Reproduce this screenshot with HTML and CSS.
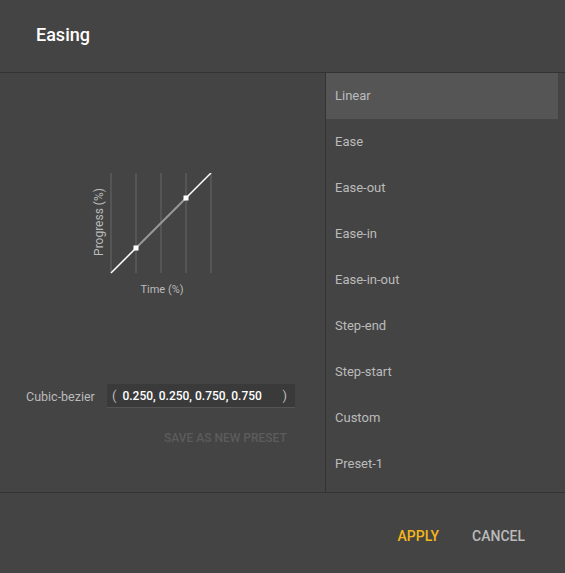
FILE: index.html
```html
<!DOCTYPE html>
<html lang="en">
<head>
  <meta charset="UTF-8" />
  <title>Easing</title>
  <link rel="stylesheet" href="styles.css">
</head>
<body>
  <div class="dialog">
    <div class="dialog-header">
      <h2>Easing</h2>
    </div>
    <div class="dialog-body">
      <div class="editor">
        <div class="graph">
          <span class="axis-y">Progress (%)</span>
          <svg width="102" height="101" viewBox="0 0 102 101">
            <g stroke="#555" stroke-width="2">
              <line x1="1" y1="0" x2="1" y2="100" />
              <line x1="26" y1="0" x2="26" y2="100" />
              <line x1="51" y1="0" x2="51" y2="100" />
              <line x1="76" y1="0" x2="76" y2="100" />
              <line x1="101" y1="0" x2="101" y2="100" />
            </g>
            <line x1="1" y1="100" x2="26" y2="75" stroke="#fff" stroke-width="1.5" />
            <line x1="26" y1="75" x2="76" y2="25" stroke="#999" stroke-width="2" />
            <line x1="76" y1="25" x2="101" y2="0" stroke="#fff" stroke-width="1.5" />
            <rect x="23.5" y="72.5" width="5" height="5" fill="#fff" />
            <rect x="73.5" y="22.5" width="5" height="5" fill="#fff" />
          </svg>
          <span class="axis-x">Time (%)</span>
        </div>
        <div class="bezier">
          <label>Cubic-bezier</label>
          <div class="bezier-input">
            <span>(</span>
            <span class="values">0.250, 0.250, 0.750, 0.750</span>
            <span>)</span>
          </div>
        </div>
        <div class="save">SAVE AS NEW PRESET</div>
      </div>
      <ul class="presets">
        <li class="active">Linear</li>
        <li>Ease</li>
        <li>Ease-out</li>
        <li>Ease-in</li>
        <li>Ease-in-out</li>
        <li>Step-end</li>
        <li>Step-start</li>
        <li>Custom</li>
        <li>Preset-1</li>
      </ul>
    </div>
    <div class="dialog-footer">
      <button class="apply">APPLY</button>
      <button class="cancel">CANCEL</button>
    </div>
  </div>
</body>
</html>
```

FILE: styles.css
```css
body {
  margin: 0;
  padding: 0;
  background: #444444;
  font-family: Roboto, "Liberation Sans", sans-serif;
}
.dialog {
  width: 565px;
  height: 573px;
  background: #444444;
  display: flex;
  flex-direction: column;
}
.dialog-header {
  height: 73px;
  border-bottom: 1px solid #333333;
  display: flex;
  align-items: center;
  padding-left: 36px;
  box-sizing: border-box;
}
.dialog-header h2 {
  margin: 0 0 3px 0;
  font-size: 18px;
  font-weight: 500;
  color: #ffffff;
}
.dialog-body {
  height: 419px;
  display: flex;
  border-bottom: 1px solid #333333;
}
.editor {
  width: 325px;
  border-right: 1px solid #333333;
  position: relative;
}
.graph {
  position: relative;
  margin: 100px 0 0 110px;
  width: 102px;
  height: 130px;
}
.graph svg {
  display: block;
}
.axis-y {
  position: absolute;
  left: -53px;
  top: 42px;
  width: 84px;
  text-align: center;
  transform: rotate(-90deg);
  font-size: 12px;
  color: #bbbbbb;
}
.axis-x {
  display: block;
  width: 104px;
  margin-top: 9px;
  text-align: center;
  font-size: 11px;
  color: #bbbbbb;
}
.bezier {
  display: flex;
  align-items: center;
  margin: 81px 0 0 26px;
}
.bezier label {
  font-size: 12.5px;
  color: #bbbbbb;
  width: 81px;
}
.bezier-input {
  width: 188px;
  height: 24px;
  background: #3a3a3a;
  border-bottom: 1px solid #555555;
  box-sizing: border-box;
  display: flex;
  align-items: center;
  padding: 0 8px 0 5px;
  font-size: 13px;
  color: #bbbbbb;
}
.bezier-input .values {
  flex: 1;
  color: #ffffff;
  font-weight: 500;
  font-size: 12px;
  margin-left: 6px;
}
.save {
  margin: 23px 0 0 164px;
  font-size: 12px;
  font-weight: 500;
  color: #5c5c5c;
}
.presets {
  list-style: none;
  margin: 0;
  padding: 0 7px 0 0;
  flex: 1;
}
.presets li {
  height: 46px;
  line-height: 46px;
  padding-left: 9px;
  font-size: 13px;
  color: #bbbbbb;
}
.presets li.active {
  background: #555555;
}
.dialog-footer {
  flex: 1;
  display: flex;
  justify-content: flex-end;
  align-items: center;
  padding: 5px 30px 0 0;
  gap: 13px;
}
.dialog-footer button {
  background: none;
  border: none;
  font-family: inherit;
  font-size: 14px;
  font-weight: 500;
  padding: 8px 10px;
  cursor: pointer;
}
.apply {
  color: #f4b71a;
}
.cancel {
  color: #bbbbbb;
}
```
